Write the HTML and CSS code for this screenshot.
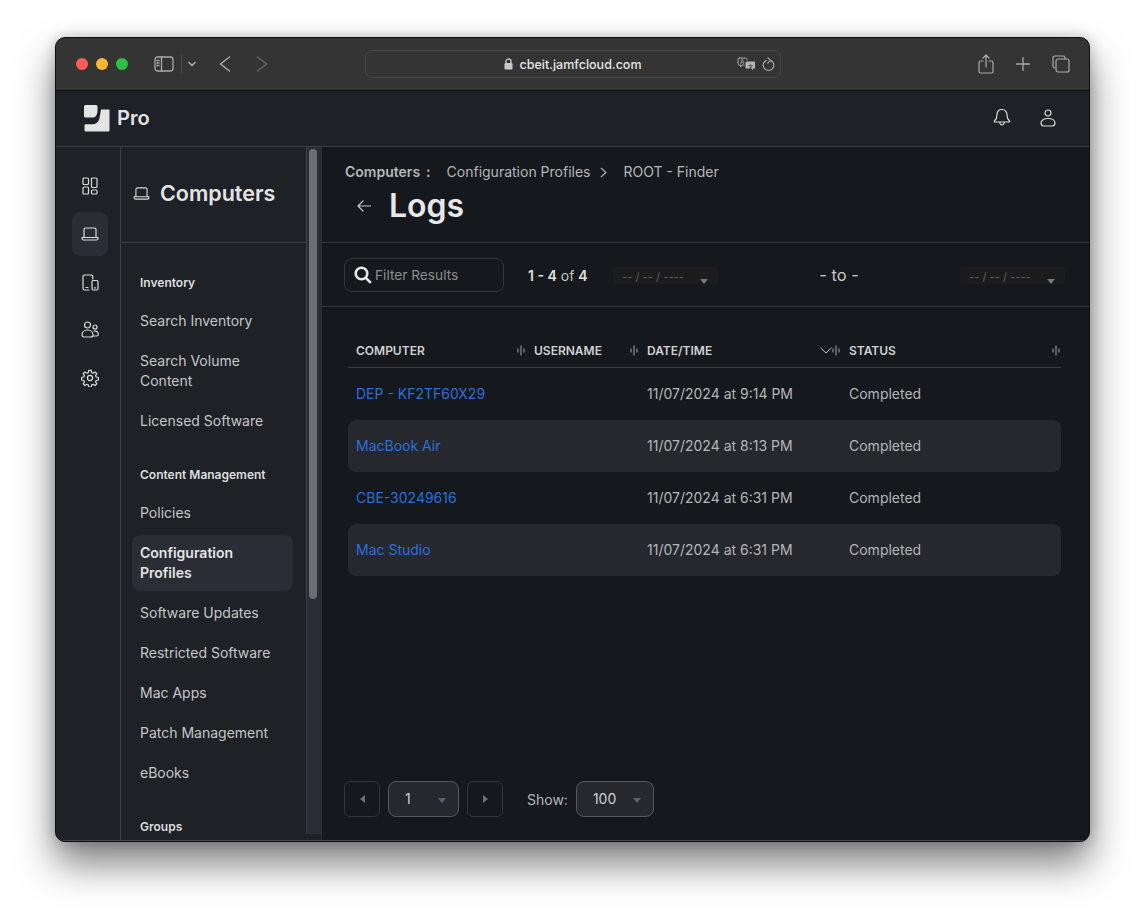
FILE: index.html
```html
<!DOCTYPE html>
<html lang="en">
<head>
    <meta charset="UTF-8">
    <meta name="viewport" content="width=device-width, initial-scale=1.0">
    <title>Logs</title>
    <link rel="stylesheet" href="styles.css">
</head>
<body>
    <div class="window">
        <!-- browser chrome -->
        <div class="titlebar">
            <div class="lights">
                <span class="light red"></span>
                <span class="light yellow"></span>
                <span class="light green"></span>
            </div>
            <svg class="chrome-icon sidebar-toggle" width="20" height="16" viewBox="0 0 20 16"><rect x="1" y="1" width="18" height="14" rx="2.5"/><path d="M7.5 1v14M3 4.5h2M3 7h2M3 9.5h2"/></svg>
            <span class="toolbar-sep"></span>
            <svg class="chrome-icon caret-small" width="10" height="6" viewBox="0 0 10 6"><path d="M2 1.5l3 3 3-3" stroke-width="1.6"/></svg>
            <svg class="chrome-icon nav-back" width="12" height="16" viewBox="0 0 12 16"><path d="M10.500 1L1.500 8l9 7" stroke-width="1.5"/></svg>
            <svg class="chrome-icon nav-forward" width="12" height="16" viewBox="0 0 12 16"><path d="M1.500 1l9 7-9 7" stroke-width="1.5"/></svg>
            <div class="address">
                <span class="address-host">
                    <svg width="9" height="12" viewBox="0 0 9 12"><path class="lock-arc" d="M2 5.5V3.4a2.5 2.5 0 0 1 5 0v2.1"/><rect class="lock-body" x="0.5" y="5" width="8" height="6.5" rx="1.2"/></svg>
                    cbeit.jamfcloud.com
                </span>
                <div class="address-tools">
                    <svg class="chrome-icon" width="19" height="15" viewBox="0 0 19 15"><path d="M2.500 1h6a1.500 1.500 0 0 1 1.500 1.500v4a1.500 1.500 0 0 1-1.500 1.500H5L3.500 10V8h-1A1.500 1.500 0 0 1 1 6.500v-4A1.500 1.500 0 0 1 2.500 1z" stroke-width="1"/><text class="translate-a" x="3" y="6.800">A</text><path class="translate-fill" d="M9.500 4h7.500a1.500 1.500 0 0 1 1.500 1.500v5a1.500 1.500 0 0 1-1.500 1.500h-.5v2.500L14 12H9.500A1.500 1.500 0 0 1 8 10.500v-5A1.500 1.500 0 0 1 9.500 4z"/><text class="translate-x" x="11" y="10.500">文</text></svg>
                    <svg class="chrome-icon" width="13" height="15" viewBox="0 0 13 15"><path d="M4.300 3.400a5.300 5.300 0 1 0 4.400 0M5.800 .8l2.900 2.600-2.900 2.600" stroke-width="1.200"/></svg>
                </div>
            </div>
            <div class="chrome-actions">
                <svg class="chrome-icon" width="16" height="20" viewBox="0 0 16 20"><path d="M5 7H2.500A1.500 1.500 0 0 0 1 8.500v9A1.500 1.500 0 0 0 2.500 19h11a1.500 1.500 0 0 0 1.500-1.500v-9A1.500 1.500 0 0 0 13.500 7H11M8 13V1.500M5 4l3-3 3 3" stroke-width="1.200"/></svg>
                <svg class="chrome-icon" width="14" height="14" viewBox="0 0 14 14"><path d="M7 .5v13M.5 7h13" stroke-width="1.300"/></svg>
                <svg class="chrome-icon" width="18" height="18" viewBox="0 0 18 18"><path d="M3 13H2.800A1.800 1.800 0 0 1 1 11.200V2.800A1.800 1.800 0 0 1 2.800 1h8.400A1.800 1.800 0 0 1 13 2.800V4" stroke-width="1.200"/><rect x="4" y="4" width="13" height="13" rx="2" stroke-width="1.200"/></svg>
            </div>
        </div>

        <!-- app header -->
        <header class="app-header">
            <div class="brand">
                <svg width="26" height="27" viewBox="0 0 26 27"><path d="M1.500 0H12a1.500 1.500 0 0 1 1.500 1.500V6c0 3-1.500 6-4 6.500H1.500A1.500 1.500 0 0 1 0 11V1.500A1.500 1.500 0 0 1 1.500 0z"/><path d="M17 4.500h8.500V25.500a1 1 0 0 1-1 1H1.500A1 1 0 0 1 .5 25.500v-5.300a1 1 0 0 1 1-1H8c4 0 6.500-2 7.500-6z"/></svg>
                <span>Pro</span>
            </div>
            <div class="header-actions">
                <svg class="line-icon" width="18" height="19" viewBox="0 0 18 19"><path d="M9 1.500c-3.200 0-5 2.400-5 5.300 0 3-.8 4.700-2.500 6.200-.4.400-.1 1 .4 1h14.200c.5 0 .8-.6.4-1-1.700-1.500-2.500-3.200-2.500-6.200 0-2.900-1.800-5.300-5-5.300zM6.800 14.500c.2 1.600 1 2.500 2.200 2.500s2-.9 2.200-2.500"/></svg>
                <svg class="line-icon" width="16" height="18" viewBox="0 0 16 18"><circle cx="8" cy="4" r="3"/><path d="M8 9.500c-4 0-7 1.800-7 4.600C1 15.700 2.200 17 4 17h8c1.800 0 3-1.300 3-2.900 0-2.800-3-4.600-7-4.600z"/></svg>
            </div>
        </header>

        <div class="app-body">
            <!-- icon rail -->
            <nav class="rail">
                <a class="rail-item">
                    <svg class="line-icon" width="16" height="18" viewBox="0 0 16 18"><rect x="1" y="1" width="5.500" height="6.500" rx="1"/><rect x="1" y="10" width="5.500" height="7" rx="1"/><rect x="9.500" y="1" width="5.500" height="9.500" rx="1"/><rect x="9.500" y="13" width="5.500" height="4" rx="1"/></svg>
                </a>
                <a class="rail-item active">
                    <svg class="line-icon" width="18" height="14" viewBox="0 0 18 14"><path d="M3 10V2.500A1.500 1.500 0 0 1 4.500 1h9A1.500 1.500 0 0 1 15 2.500V10M1 10.500h16v.7c0 .9-.7 1.800-1.700 1.800H2.700C1.700 13 1 12.100 1 11.200z"/></svg>
                </a>
                <a class="rail-item">
                    <svg class="line-icon" width="17" height="17" viewBox="0 0 17 17"><path d="M7 16H2.500A1.500 1.500 0 0 1 1 14.500v-12A1.500 1.500 0 0 1 2.500 1h6.800A1.500 1.500 0 0 1 10.800 2.500V5"/><rect x="10" y="6.500" width="6" height="9.500" rx="1.200"/><path d="M4 13.500h2M12.500 13.800h1"/></svg>
                </a>
                <a class="rail-item">
                    <svg class="line-icon" width="18" height="18" viewBox="0 0 18 18"><circle cx="6.500" cy="4" r="3"/><circle cx="14" cy="6" r="2"/><path d="M1 14c0-3 2.300-5 5.500-5s5.500 2 5.500 5c0 1.300-1 2-2 2H3c-1.200 0-2-.8-2-2zM13 10c2.500-.3 4.300 1.100 4.300 3.200 0 1-.7 1.800-1.800 1.800H12.500"/></svg>
                </a>
                <a class="rail-item">
                    <svg class="line-icon gear-icon" width="18" height="18" viewBox="0 0 24 24"><circle cx="12" cy="12" r="3.400"/><path d="M10.300 1.800h3.400l.6 3 1.900.8 2.500-1.700 2.400 2.400-1.700 2.500.8 1.900 3 .6v3.400l-3 .6-.8 1.900 1.700 2.500-2.400 2.400-2.500-1.700-1.900.8-.6 3h-3.400l-.6-3-1.900-.8-2.500 1.700-2.400-2.400 1.700-2.500-.8-1.900-3-.6v-3.400l3-.6.800-1.900-1.700-2.500 2.400-2.400 2.500 1.700 1.900-.8z"/></svg>
                </a>
            </nav>

            <!-- section menu -->
            <aside class="sidebar">
                <div class="sidebar-title">
                    <svg class="line-icon" width="17" height="13" viewBox="0 0 18 14"><path d="M3 10V2.500A1.500 1.500 0 0 1 4.500 1h9A1.500 1.500 0 0 1 15 2.500V10M1 10.500h16v.7c0 .9-.7 1.800-1.700 1.800H2.700C1.700 13 1 12.100 1 11.200z"/></svg>
                    <h2>Computers</h2>
                </div>
                <div class="sidebar-menu">
                    <h3 class="menu-heading">Inventory</h3>
                    <a class="menu-item">Search Inventory</a>
                    <a class="menu-item">Search Volume Content</a>
                    <a class="menu-item">Licensed Software</a>
                    <h3 class="menu-heading">Content Management</h3>
                    <a class="menu-item">Policies</a>
                    <a class="menu-item active">Configuration Profiles</a>
                    <a class="menu-item">Software Updates</a>
                    <a class="menu-item">Restricted Software</a>
                    <a class="menu-item">Mac Apps</a>
                    <a class="menu-item">Patch Management</a>
                    <a class="menu-item">eBooks</a>
                    <h3 class="menu-heading">Groups</h3>
                </div>
            </aside>

            <div class="scrollbar"><div class="scrollbar-thumb"></div></div>

            <!-- page content -->
            <main class="content">
                <div class="page-head">
                    <div class="breadcrumbs">
                        <span class="crumb-root">Computers</span>
                        <span class="crumb-colon">:</span>
                        <span class="crumb">Configuration Profiles</span>
                        <svg class="crumb-chevron" width="7" height="11" viewBox="0 0 7 11"><path d="M1 1l5 4.500-5 4.500"/></svg>
                        <span class="crumb">ROOT - Finder</span>
                    </div>
                    <div class="page-title">
                        <svg class="line-icon back-arrow" width="14" height="12" viewBox="0 0 14 12"><path d="M13.500 6H1M6 1L1 6l5 5"/></svg>
                        <h1>Logs</h1>
                    </div>
                </div>

                <div class="filter-bar">
                    <label class="filter-input">
                        <svg width="18" height="18" viewBox="0 0 18 18"><circle cx="7.500" cy="7.500" r="5.800"/><path d="M11.800 11.800l5 5"/></svg>
                        <span>Filter Results</span>
                    </label>
                    <div class="result-count"><b>1 - 4</b> of <b>4</b></div>
                    <div class="date-range">
                        <div class="date-input">-- / -- / ----<i class="date-caret"></i></div>
                        <span class="date-to">- to -</span>
                        <div class="date-input">-- / -- / ----<i class="date-caret"></i></div>
                    </div>
                </div>

                <div class="table">
                    <div class="table-head">
                        <div class="th">COMPUTER
                            <svg class="col-handle" width="8" height="11" viewBox="0 0 8 11"><path d="M1 3.500v4M4 .5v10M7 3.500v4"/></svg>
                        </div>
                        <div class="th">USERNAME
                            <svg class="col-handle" width="8" height="11" viewBox="0 0 8 11"><path d="M1 3.500v4M4 .5v10M7 3.500v4"/></svg>
                        </div>
                        <div class="th">DATE/TIME
                            <svg class="sort-chevron" width="12" height="7" viewBox="0 0 12 7"><path d="M.5 .8L6 6 11.500 .8"/></svg>
                            <svg class="col-handle" width="8" height="11" viewBox="0 0 8 11"><path d="M1 3.500v4M4 .5v10M7 3.500v4"/></svg>
                        </div>
                        <div class="th">STATUS
                            <svg class="col-handle" width="8" height="11" viewBox="0 0 8 11"><path d="M1 3.500v4M4 .5v10M7 3.500v4"/></svg>
                        </div>
                    </div>
                    <div class="table-row">
                        <a class="td link">DEP - KF2TF60X29</a><div class="td"></div><div class="td">11/07/2024 at 9:14 PM</div><div class="td">Completed</div>
                    </div>
                    <div class="table-row striped">
                        <a class="td link">MacBook Air</a><div class="td"></div><div class="td">11/07/2024 at 8:13 PM</div><div class="td">Completed</div>
                    </div>
                    <div class="table-row">
                        <a class="td link">CBE-30249616</a><div class="td"></div><div class="td">11/07/2024 at 6:31 PM</div><div class="td">Completed</div>
                    </div>
                    <div class="table-row striped">
                        <a class="td link">Mac Studio</a><div class="td"></div><div class="td">11/07/2024 at 6:31 PM</div><div class="td">Completed</div>
                    </div>
                </div>

                <div class="pager">
                    <button class="page-btn"><i class="tri-left"></i></button>
                    <div class="select page-select">1<i class="select-caret"></i></div>
                    <button class="page-btn"><i class="tri-right"></i></button>
                    <span class="show-label">Show:</span>
                    <div class="select show-select">100<i class="select-caret"></i></div>
                </div>
            </main>
        </div>
    </div>
</body>
</html>
```

FILE: styles.css
```css
* {
    box-sizing: border-box;
}
html, body {
    height: 100%;
}
body {
    margin: 0;
    overflow: hidden;
    background-color: #fff;
    font-family: Inter, "Liberation Sans", sans-serif;
    color: #c6c7c9;
}
svg {
    display: block;
    flex: none;
}

/* window frame */
.window {
    display: flex;
    flex-direction: column;
    width: 1035px;
    height: 805px;
    margin: 37px 0 0 55px;
    border: 1px solid #0d0e10;
    border-radius: 10px;
    overflow: hidden;
    background-color: #1e2126;
    box-shadow: 0 22px 38px rgba(0,0,0,0.5), 0 0 14px rgba(0,0,0,0.22);
}

/* browser chrome */
.titlebar {
    display: flex;
    align-items: center;
    flex: none;
    height: 53px;
    padding-left: 20px;
    background-color: #343434;
    border-bottom: 1px solid #0b0c0d;
}
.lights {
    display: flex;
    gap: 8px;
}
.light {
    width: 12px;
    height: 12px;
    border-radius: 50%;
}
.red { background-color: #fc5b57; }
.yellow { background-color: #fdb631; }
.green { background-color: #29c33f; }
.chrome-icon {
    fill: none;
    stroke: #a9a9a9;
    stroke-width: 1.3;
    stroke-linecap: round;
    stroke-linejoin: round;
}
.sidebar-toggle {
    margin-left: 26px;
}
.toolbar-sep {
    width: 1px;
    height: 18px;
    margin-left: 7px;
    background-color: #4a4a4a;
}
.caret-small {
    margin-left: 5px;
}
.nav-back {
    margin-left: 22px;
}
.nav-forward {
    margin-left: 25px;
    stroke: #636363;
}
.address {
    position: relative;
    display: flex;
    align-items: center;
    justify-content: center;
    width: 416px;
    height: 28px;
    margin-left: 97px;
    border: 1px solid #474747;
    border-radius: 7px;
    font-size: 12.5px;
    font-weight: 500;
    color: #e6e6e6;
}
.address-host {
    display: flex;
    align-items: center;
    gap: 6px;
}
.lock-arc {
    fill: none;
    stroke: #c9c9c9;
    stroke-width: 1.3;
}
.lock-body {
    fill: #c9c9c9;
}
.address-tools {
    position: absolute;
    top: 6px;
    right: 5px;
    display: flex;
    align-items: center;
    gap: 6px;
}
.translate-a {
    font-size: 6px;
    fill: #a9a9a9;
    stroke: none;
}
.translate-fill {
    fill: #b5b5b5;
    stroke: #343434;
    stroke-width: 1;
}
.translate-x {
    font-family: "Noto Sans CJK SC", sans-serif;
    font-size: 5px;
    fill: #343434;
    stroke: none;
}
.chrome-actions {
    display: flex;
    align-items: center;
    gap: 22px;
    margin-left: auto;
    padding-right: 19px;
}

/* app header */
.app-header {
    display: flex;
    align-items: center;
    justify-content: space-between;
    flex: none;
    height: 56px;
    padding: 0 33px 2px 28px;
    background-color: #1e2126;
    border-bottom: 1px solid #3b3e43;
}
.brand {
    display: flex;
    align-items: center;
    gap: 7px;
    font-size: 20px;
    font-weight: 600;
    color: #e4e4e5;
}
.brand svg {
    fill: #e4e4e5;
    margin-top: 2px;
}
.header-actions {
    display: flex;
    align-items: center;
    gap: 29px;
}
.line-icon {
    fill: none;
    stroke: #dcdcdd;
    stroke-width: 1.2;
    stroke-linecap: round;
    stroke-linejoin: round;
}
.gear-icon {
    stroke-width: 1.6;
}

.app-body {
    display: flex;
    flex: 1;
    min-height: 0;
    border-bottom: 1px solid #44474c;
}

/* icon rail */
.rail {
    display: flex;
    flex-direction: column;
    align-items: center;
    gap: 4px;
    flex: none;
    width: 65px;
    padding: 17px 0 0 4px;
    border-right: 1px solid #3b3e43;
}
.rail-item {
    display: flex;
    align-items: center;
    justify-content: center;
    width: 36px;
    height: 44px;
    border-radius: 8px;
}
.rail-item.active {
    background-color: #2a2d33;
}

/* section menu */
.sidebar {
    display: flex;
    flex-direction: column;
    flex: none;
    width: 185px;
    overflow: hidden;
}
.sidebar-title {
    display: flex;
    align-items: flex-start;
    gap: 10px;
    flex: none;
    height: 96px;
    padding: 33px 0 0 12px;
    border-bottom: 1px solid #3b3e43;
}
.sidebar-title svg {
    margin-top: 7px;
}
.sidebar-title h2 {
    margin: 0;
    font-size: 21.5px;
    line-height: 26px;
    font-weight: 600;
    color: #e4e4e5;
}
.sidebar-menu {
    display: flex;
    flex-direction: column;
    gap: 4px;
    padding: 32px 13px 0 11px;
}
.menu-heading {
    margin: 24px 0 8px 8px;
    font-size: 12px;
    line-height: 16px;
    font-weight: 600;
    color: #dcdcdd;
}
.menu-heading:first-child {
    margin-top: 0;
}
.menu-item {
    padding: 8px;
    font-size: 14px;
    line-height: 20px;
    color: #c6c7c9;
    border-radius: 8px;
}
.menu-item.active {
    background-color: #2a2d33;
    font-weight: 600;
    color: #e4e4e5;
}

/* scrollbar */
.scrollbar {
    flex: none;
    width: 15px;
    padding: 2px 0 0 2px;
    margin-bottom: 6px;
    background-color: #2a2d33;
    border-left: 1px solid #3b3e43;
}
.scrollbar-thumb {
    width: 8px;
    height: 450px;
    border-radius: 4px;
    background-color: #6c6e73;
}

/* page content */
.content {
    display: flex;
    flex-direction: column;
    flex: 1;
    min-width: 0;
    background-color: #15181d;
    border-left: 1px solid #2c2f34;
}
.page-head {
    flex: none;
    height: 96px;
    padding: 16px 0 0 23px;
    border-bottom: 1px solid #33363b;
}
.breadcrumbs {
    display: flex;
    align-items: center;
    font-size: 14px;
    line-height: 18px;
    color: #b5b6b8;
}
.crumb-root {
    font-weight: 600;
}
.crumb-colon {
    margin: 0 16px 0 6px;
    font-weight: 600;
}
.crumb-chevron {
    margin: 0 17px 0 9px;
    fill: none;
    stroke: #b5b6b8;
    stroke-width: 1.1;
}
.page-title {
    display: flex;
    align-items: center;
    gap: 18px;
    padding-left: 12px;
    margin-top: 5px;
}
.page-title h1 {
    margin: 0;
    font-size: 32px;
    line-height: 40px;
    font-weight: 600;
    color: #e8e8e9;
}
.back-arrow {
    stroke: #c6c7c9;
}

/* filter row */
.filter-bar {
    display: flex;
    align-items: center;
    gap: 24px;
    flex: none;
    height: 64px;
    padding: 1px 24px 0 22px;
    border-bottom: 1px solid #33363b;
}
.filter-input {
    display: flex;
    align-items: center;
    gap: 3px;
    width: 160px;
    height: 34px;
    padding-left: 9px;
    border: 1px solid #33363b;
    border-radius: 8px;
    font-size: 13.7px;
    color: #8b8d90;
}
.filter-input svg {
    fill: none;
    stroke: #e8e8e9;
    stroke-width: 2.6;
}
.result-count {
    min-width: 61px;
    font-size: 14px;
    color: #c6c7c9;
}
.result-count b {
    font-weight: 600;
    color: #e0e0e1;
}
.date-range {
    display: flex;
    align-items: center;
    justify-content: space-between;
    flex: 1;
}
.date-input {
    position: relative;
    width: 105px;
    height: 17px;
    padding: 4px 0 0 9px;
    background-color: #1c1c1e;
    border-radius: 3px;
    font-size: 11.2px;
    line-height: 13px;
    color: #5e6063;
}
.date-caret {
    position: absolute;
    top: 12px;
    right: 10px;
    border-top: 5px solid #77797c;
    border-left: 4px solid transparent;
    border-right: 4px solid transparent;
}
.date-to {
    font-size: 16.5px;
    color: #c6c7c9;
}

/* logs table */
.table {
    flex: none;
    margin: 24px 28px 0 26px;
}
.table-head,
.table-row {
    display: grid;
    grid-template-columns: 178px 113px 202px 220px;
    align-items: center;
}
.table-head {
    height: 37px;
    padding-top: 2px;
    border-bottom: 1px solid #3b3e43;
}
.th {
    position: relative;
    padding-left: 8px;
    font-size: 12px;
    font-weight: 600;
    color: #d0d1d2;
}
.col-handle {
    position: absolute;
    top: 2px;
    right: 1px;
    fill: none;
    stroke: #a4a5a7;
    stroke-width: 1;
}
.sort-chevron {
    position: absolute;
    top: 4px;
    right: 9px;
    fill: none;
    stroke: #c6c7c9;
    stroke-width: 1;
}
.table-row {
    height: 52px;
    border-radius: 8px;
}
.table-row.striped {
    background-color: #26282e;
}
.td {
    padding: 0 0 2px 8px;
    font-size: 14px;
    color: #b5b6b8;
}
.td.link {
    color: #2b6fdc;
}

/* pagination */
.pager {
    display: flex;
    align-items: center;
    margin-top: auto;
    padding: 0 0 23px 22px;
}
.page-btn {
    display: flex;
    align-items: center;
    justify-content: center;
    width: 36px;
    height: 36px;
    padding: 0;
    background: none;
    border: 1px solid #33363b;
    border-radius: 6px;
}
.tri-left {
    border-right: 5px solid #6e7074;
    border-top: 4px solid transparent;
    border-bottom: 4px solid transparent;
}
.tri-right {
    border-left: 5px solid #6e7074;
    border-top: 4px solid transparent;
    border-bottom: 4px solid transparent;
}
.select {
    position: relative;
    height: 36px;
    padding-left: 16px;
    background-color: #26282e;
    border: 1px solid #55585d;
    border-radius: 8px;
    font-size: 14px;
    line-height: 33px;
    color: #d0d1d2;
}
.select-caret {
    position: absolute;
    top: 16px;
    right: 12px;
    border-top: 5px solid #5a6078;
    border-left: 4px solid transparent;
    border-right: 4px solid transparent;
}
.page-select {
    width: 71px;
    margin: 0 8px;
}
.show-select {
    width: 78px;
}
.show-label {
    margin: 0 8px 0 24px;
    font-size: 14px;
    color: #b5b6b8;
}
```
